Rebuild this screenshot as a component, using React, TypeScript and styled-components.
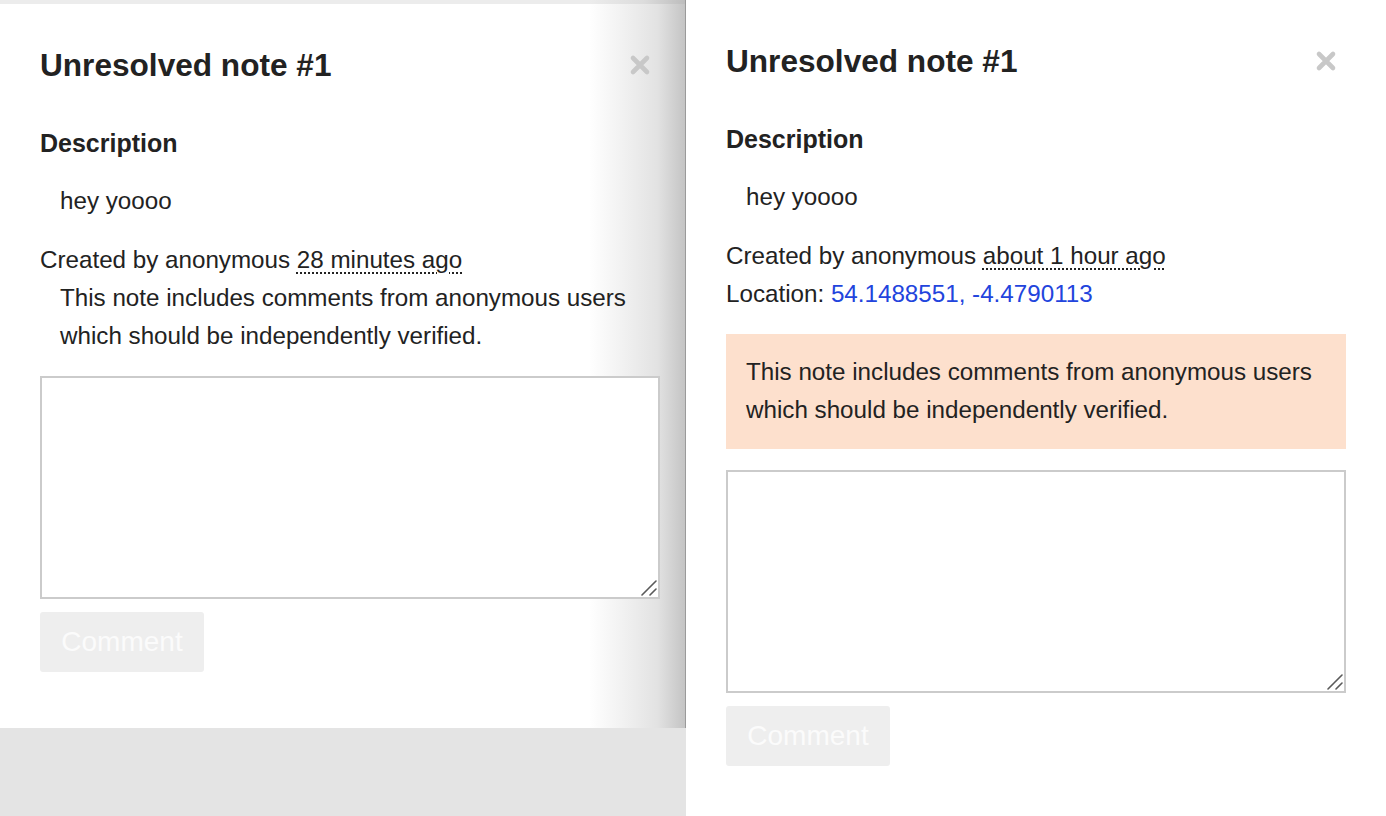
import styled, {createGlobalStyle} from "styled-components";

const GlobalStyle = createGlobalStyle`
    html, body {
        margin: 0;
        padding: 0;
        background: #fff;
    }

    body {
        font-family: "Liberation Sans", Arial, sans-serif;
        color: #222;
    }
`

const StyledPage = styled.div`
    display: flex;

    flex-direction: row;

    width: 1386px;
    height: 816px;

    overflow: hidden;
`

const StyledLeftColumn = styled.div`
    display: flex;

    flex-direction: column;

    width: 686px;
    flex-shrink: 0;
`

const StyledTopStrip = styled.div`
    height: 4px;

    background: linear-gradient(to right, #ececec 86%, #dcdcdc 94%, #bdbdbd 100%);
    border-right: 1px solid #9a9a9a;
`

const StyledSidebar = styled.div`
    box-sizing: border-box;

    padding: 0 26px 56px 40px;

    background: linear-gradient(to right, #ffffff 86%, #f1f1f1 91%, #e2e2e2 96%, #c4c4c4 100%);
    border-right: 1px solid #9a9a9a;
`

const StyledFiller = styled.div`
    flex: 1;

    background-color: #e4e4e4;
`

const StyledRightPanel = styled.div`
    box-sizing: border-box;

    flex: 1;

    padding: 0 40px;

    background-color: #fff;
`

const StyledTitleRow = styled.div`
    display: flex;

    flex-direction: row;
    justify-content: space-between;
    align-items: center;

    width: 620px;

    padding-top: 41px;
`

const StyledTitle = styled.h2`
    margin: 0;

    font-size: 31.6px;
    line-height: 40px;
    font-weight: bold;
`

const StyledCloseButton = styled.button`
    display: flex;

    justify-content: center;
    align-items: center;

    width: 40px;
    height: 40px;

    padding: 0;

    border: none;
    background: transparent;

    cursor: pointer;
`

const StyledHeading = styled.h4`
    margin: 39px 0 0;

    font-size: 25px;
    line-height: 38px;
    font-weight: bold;
`

const StyledDescription = styled.div`
    margin-top: 20px;

    padding: 0 20px;

    font-size: 24.2px;
    line-height: 38px;
`

const StyledMeta = styled.div`
    margin-top: 21px;

    font-size: 24.2px;
    line-height: 37.5px;
    white-space: nowrap;
`

const StyledAbbr = styled.abbr`
    text-decoration: underline dotted 2px;
    text-underline-offset: 4px;
`

const StyledLink = styled.a`
    color: #2244dd;
    text-decoration: none;
`

const StyledNotice = styled.div<{ $alert?: boolean }>`
    width: 620px;
    box-sizing: border-box;

    margin-top: ${props => props.$alert ? "22px" : "0"};
    padding: ${props => props.$alert ? "19px 20px 20px" : "0 20px"};

    font-size: 24.2px;
    line-height: 38px;
    white-space: nowrap;

    background-color: ${props => props.$alert ? "#fde0cd" : "transparent"};
`

const StyledTextareaWrap = styled.div`
    position: relative;

    width: 620px;
    height: 223px;

    margin-top: 21px;
`

const StyledTextarea = styled.textarea`
    display: block;
    box-sizing: border-box;

    width: 100%;
    height: 100%;

    margin: 0;

    border: 2px solid #cbcbcb;
    border-radius: 0;

    font-family: "Liberation Sans", Arial, sans-serif;
    font-size: 24px;

    background: #fff;
    outline: none;
    resize: none;
`

const StyledGrabber = styled.svg`
    position: absolute;
    right: 3px;
    bottom: 3px;

    pointer-events: none;
`

const StyledCommentButton = styled.button`
    display: block;

    width: 164px;
    height: 60px;

    margin-top: 13px;
    padding: 0;

    border: none;
    border-radius: 3px;

    font-family: "Liberation Sans", Arial, sans-serif;
    font-size: 28px;

    color: #fbfbfb;
    background-color: #eeeeee;
`

const CloseIcon = () => (
	<svg width="22" height="22" viewBox="0 0 22 22">
		<path d="M4 4 L18 18 M18 4 L4 18" stroke="#c8c8c8" strokeWidth="4.6" strokeLinecap="round"/>
	</svg>
)

const Grabber = () => (
	<StyledGrabber width="16" height="16" viewBox="0 0 16 16">
		<path d="M1 15 L15 1 M9 15 L15 9" stroke="#5a5a5a" strokeWidth="1.6" strokeLinecap="round"/>
	</StyledGrabber>
)

type NoteProps = {
	timeAgo: string
	location?: string
	alert?: boolean
}

const NoteContent = ({timeAgo, location, alert}: NoteProps) => (
	<>
		<StyledTitleRow>
			<StyledTitle>Unresolved note #1</StyledTitle>
			<StyledCloseButton aria-label="Close"><CloseIcon/></StyledCloseButton>
		</StyledTitleRow>

		<StyledHeading>Description</StyledHeading>
		<StyledDescription>hey yoooo</StyledDescription>

		<StyledMeta>
			<div>Created by anonymous <StyledAbbr title="created">{timeAgo}</StyledAbbr></div>
			{location && (
				<div>Location: <StyledLink href="#">{location}</StyledLink></div>
			)}
		</StyledMeta>

		<StyledNotice $alert={alert}>
			This note includes comments from anonymous users
			<br/>
			which should be independently verified.
		</StyledNotice>

		<StyledTextareaWrap>
			<StyledTextarea/>
			<Grabber/>
		</StyledTextareaWrap>
		<StyledCommentButton disabled>Comment</StyledCommentButton>
	</>
)

export default function App() {
	return (
		<>
			<GlobalStyle/>
			<StyledPage>
				<StyledLeftColumn>
					<StyledTopStrip/>
					<StyledSidebar>
						<NoteContent timeAgo="28 minutes ago"/>
					</StyledSidebar>
					<StyledFiller/>
				</StyledLeftColumn>
				<StyledRightPanel>
					<NoteContent timeAgo="about 1 hour ago" location="54.1488551, -4.4790113" alert/>
				</StyledRightPanel>
			</StyledPage>
		</>
	)
}
